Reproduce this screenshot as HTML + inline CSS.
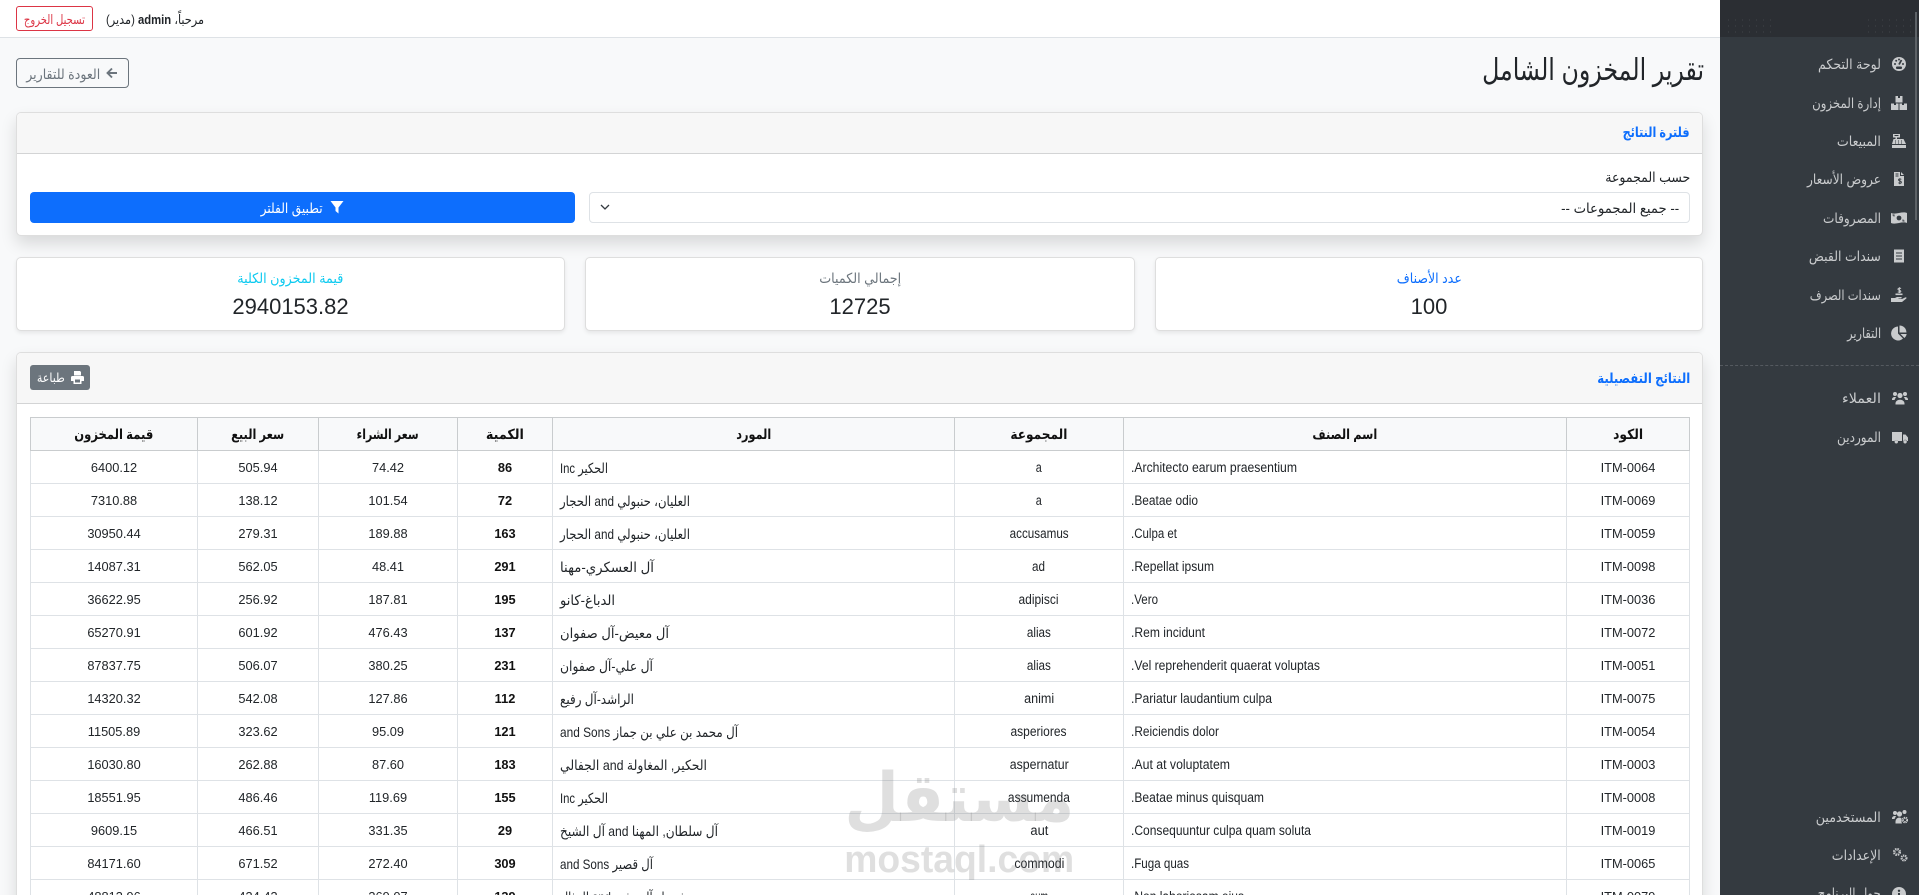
<!DOCTYPE html>
<html lang="ar" dir="rtl">
<head>
<meta charset="utf-8">
<title>تقرير المخزون الشامل</title>
<style>
*{box-sizing:border-box}
html,body{margin:0;padding:0;width:1919px;height:895px;overflow:hidden;background:#f8f9fa}
body{position:relative;font-family:"Liberation Sans","DejaVu Sans",sans-serif;font-size:13px;color:#212529}
#app{position:absolute;left:0;top:0;width:1919px;height:895px;overflow:hidden;contain:paint}
.a{position:absolute;white-space:nowrap}
.c{display:flex;justify-content:center}
.f{display:inline-block;white-space:nowrap;font-style:normal;transform-origin:center center}
.r .f{transform-origin:right center}
.l .f{transform-origin:left center}
#top{left:0;top:0;width:1720px;height:38px;background:#fff;border-bottom:1px solid #dee2e6}
#side{left:1720px;top:0;width:199px;height:895px;background:#343a40}
#sh{position:absolute;left:0;top:0;width:199px;height:37px;background:#2b2e33}
.dots{position:absolute;top:17px;height:20px;background-image:radial-gradient(circle,rgba(255,255,255,.1) .6px,transparent .8px);background-size:7px 6px}
#sb{position:absolute;left:195px;top:12px;width:2px;height:208px;background:#5d6267}
#dv{position:absolute;left:0;top:365px;width:199px;border-top:1px dashed #555a60}
.it{position:absolute;right:38px;height:20px;line-height:20px;font-size:14px;color:#c9cbcd;white-space:nowrap}
.ic{position:absolute;width:16px;height:16px;right:12px;fill:#c9cbcd}
.card{position:absolute;background:#fff;border:1px solid rgba(0,0,0,.13);border-radius:5px}
.hd{position:absolute;left:0;top:0;right:0;background:#f7f7f7;border-bottom:1px solid #d3d4d5;border-radius:4px 4px 0 0}
.sh{box-shadow:0 8px 16px rgba(0,0,0,.13)}
.ss{box-shadow:0 2px 4px rgba(0,0,0,.08)}
.lb{height:20px;line-height:20px;font-size:14px}
.num{height:28px;line-height:28px;text-align:center;font-size:22px;color:#212529}
table{position:absolute;left:30px;top:417px;width:1659px;border-collapse:collapse;table-layout:fixed;background:#fff;font-size:12.8px}
th{height:33px;padding:0 8px;background:#f8f9fa;border:1px solid #c9ccce;font-size:14px;color:#111;font-weight:bold;text-align:center}
td{height:33px;padding:0 7px;border:1px solid #dee2e6;text-align:center;color:#212529;white-space:nowrap}
td.l{text-align:left}
td.bd{font-weight:bold;color:#111}
td .f,th .f{line-height:18px}
td .f{font-size:13.5px;position:relative;top:1px}
td.s .f{font-size:14px}
#wm{left:0;top:0;width:1919px;height:895px;pointer-events:none}
</style>
</head>
<body>
<div id="app">

<div id="top" class="a"></div>
<div class="a" style="left:16px;top:6px;width:77px;height:25px;border:1px solid #dc3545;border-radius:3px"></div>
<div class="a c" style="left:16px;top:10px;width:77px;height:20px;color:#dc3545;font-size:13px;line-height:20px"><i class="f" style="--w:61">تسجيل الخروج</i></div>
<div class="a r" style="right:1715px;top:10px;height:20px;line-height:20px;font-size:13px;color:#212529"><i class="f" style="--w:98">مرحباً، <b>admin</b> (مدير)</i></div>

<div class="a r" style="right:215px;top:53px;height:36px;line-height:36px;font-size:30px;color:#212529"><i class="f" style="--w:222">تقرير المخزون الشامل</i></div>

<div class="a" style="left:16px;top:58px;width:113px;height:30px;border:1px solid #6c757d;border-radius:4px"></div>
<svg class="a" style="left:106px;top:67px" width="12" height="12" viewBox="0 0 12 12"><path d="M11 6H2M6 1.500 1.500 6 6 10.500" fill="none" stroke="#6c757d" stroke-width="1.900"/></svg>
<div class="a c" style="left:23px;top:64px;width:80px;height:20px;line-height:20px;font-size:14px;color:#6c757d"><i class="f" style="--w:74">العودة للتقارير</i></div>

<!-- filter card -->
<div class="card sh" style="left:16px;top:112px;width:1687px;height:124px">
  <div class="hd" style="height:41px"></div>
</div>
<div class="a r" style="right:229px;top:122px;height:20px;line-height:20px;font-size:14px;font-weight:bold;color:#0d6efd"><i class="f" style="--w:67">فلترة النتائج</i></div>
<div class="a r" style="right:229px;top:167px;height:20px;line-height:20px;font-size:14px;color:#212529"><i class="f" style="--w:85">حسب المجموعة</i></div>
<div class="a" style="left:589px;top:192px;width:1101px;height:31px;background:#fff;border:1px solid #dee2e6;border-radius:4px"></div>
<svg class="a" style="left:600px;top:203px" width="10" height="8" viewBox="0 0 10 8"><path d="M1 2l4 4 4-4" fill="none" stroke="#343a40" stroke-width="1.300"/></svg>
<div class="a r" style="right:240px;top:198px;height:20px;line-height:20px;font-size:14px;color:#212529"><i class="f" style="--w:118">-- جميع المجموعات --</i></div>
<div class="a" style="left:30px;top:192px;width:545px;height:31px;background:#0d6efd;border-radius:4px"></div>
<svg class="a" style="left:330px;top:200px" width="14" height="14" viewBox="0 0 14 14"><path d="M.5 1h13L8.500 7.500V13.500L5.500 11V7.500z" fill="#fff"/></svg>
<div class="a c" style="left:252px;top:198px;width:80px;height:20px;line-height:20px;font-size:14px;color:#fff"><i class="f" style="--w:62">تطبيق الفلتر</i></div>

<!-- stats -->
<div class="card ss" style="left:16px;top:257px;width:549px;height:74px"></div>
<div class="card ss" style="left:585px;top:257px;width:550px;height:74px"></div>
<div class="card ss" style="left:1155px;top:257px;width:548px;height:74px"></div>
<div class="a lb c" style="left:16px;top:268px;width:549px;color:#0dcaf0"><i class="f" style="--w:106">قيمة المخزون الكلية</i></div>
<div class="a num" style="left:16px;top:293px;width:549px">2940153.82</div>
<div class="a lb c" style="left:585px;top:268px;width:550px;color:#6c757d"><i class="f" style="--w:82">إجمالي الكميات</i></div>
<div class="a num" style="left:585px;top:293px;width:550px">12725</div>
<div class="a lb c" style="left:1155px;top:268px;width:548px;color:#0d6efd"><i class="f" style="--w:65">عدد الأصناف</i></div>
<div class="a num" style="left:1155px;top:293px;width:548px">100</div>

<!-- table card -->
<div class="card sh" style="left:16px;top:352px;width:1687px;height:600px">
  <div class="hd" style="height:51px"></div>
</div>
<div class="a r" style="right:229px;top:368px;height:20px;line-height:20px;font-size:14px;font-weight:bold;color:#0d6efd"><i class="f" style="--w:93">النتائج التفصيلية</i></div>
<div class="a" style="left:30px;top:365px;width:60px;height:25px;background:#6c757d;border-radius:3px"></div>
<svg class="a" style="left:71px;top:371px" width="13" height="13" viewBox="0 0 13 13"><path d="M3 0h6l1 1v3.500H3zM1.500 5h10A1.500 1.500 0 0 1 13 6.500V10h-2.500v3h-8v-3H0V6.500A1.500 1.500 0 0 1 1.500 5zM4 8.500V11.500h5V8.500z" fill="#fff"/></svg>
<div class="a c" style="left:31px;top:368px;width:40px;height:20px;line-height:20px;font-size:12.500px;color:#fff"><i class="f" style="--w:28">طباعة</i></div>

<table>
<colgroup><col style="width:123px"><col style="width:443px"><col style="width:169px"><col style="width:402px"><col style="width:95px"><col style="width:139px"><col style="width:121px"><col style="width:167px"></colgroup>
<thead><tr>
<th><b class="f" style="--w:30">الكود</b></th>
<th><b class="f" style="--w:65">اسم الصنف</b></th>
<th><b class="f" style="--w:57">المجموعة</b></th>
<th><b class="f" style="--w:35">المورد</b></th>
<th><b class="f" style="--w:38">الكمية</b></th>
<th><b class="f" style="--w:62">سعر الشراء</b></th>
<th><b class="f" style="--w:53">سعر البيع</b></th>
<th><b class="f" style="--w:79">قيمة المخزون</b></th>
</tr></thead>
<tbody>
<tr><td>ITM-0064</td><td class="l"><i class="f" style="--w:166">Architecto earum praesentium.</i></td><td><i class="f" style="--w:6">a</i></td><td class="l s"><i class="f" style="--w:48">الحكير Inc</i></td><td class="bd">86</td><td>74.42</td><td>505.94</td><td>6400.12</td></tr>
<tr><td>ITM-0069</td><td class="l"><i class="f" style="--w:67">Beatae odio.</i></td><td><i class="f" style="--w:6">a</i></td><td class="l s"><i class="f" style="--w:130">العليان، حنبولي and الحجار</i></td><td class="bd">72</td><td>101.54</td><td>138.12</td><td>7310.88</td></tr>
<tr><td>ITM-0059</td><td class="l"><i class="f" style="--w:46">Culpa et.</i></td><td><i class="f" style="--w:59">accusamus</i></td><td class="l s"><i class="f" style="--w:130">العليان، حنبولي and الحجار</i></td><td class="bd">163</td><td>189.88</td><td>279.31</td><td>30950.44</td></tr>
<tr><td>ITM-0098</td><td class="l"><i class="f" style="--w:83">Repellat ipsum.</i></td><td><i class="f" style="--w:13">ad</i></td><td class="l s"><i class="f" style="--w:94">آل العسكري-مهنا</i></td><td class="bd">291</td><td>48.41</td><td>562.05</td><td>14087.31</td></tr>
<tr><td>ITM-0036</td><td class="l"><i class="f" style="--w:27">Vero.</i></td><td><i class="f" style="--w:40">adipisci</i></td><td class="l s"><i class="f" style="--w:55">الدباغ-كانو</i></td><td class="bd">195</td><td>187.81</td><td>256.92</td><td>36622.95</td></tr>
<tr><td>ITM-0072</td><td class="l"><i class="f" style="--w:74">Rem incidunt.</i></td><td><i class="f" style="--w:24">alias</i></td><td class="l s"><i class="f" style="--w:109">آل معيض-آل صفوان</i></td><td class="bd">137</td><td>476.43</td><td>601.92</td><td>65270.91</td></tr>
<tr><td>ITM-0051</td><td class="l"><i class="f" style="--w:189">Vel reprehenderit quaerat voluptas.</i></td><td><i class="f" style="--w:24">alias</i></td><td class="l s"><i class="f" style="--w:93">آل علي-آل صفوان</i></td><td class="bd">231</td><td>380.25</td><td>506.07</td><td>87837.75</td></tr>
<tr><td>ITM-0075</td><td class="l"><i class="f" style="--w:141">Pariatur laudantium culpa.</i></td><td><i class="f" style="--w:30">animi</i></td><td class="l s"><i class="f" style="--w:74">الراشد-آل رفيع</i></td><td class="bd">112</td><td>127.86</td><td>542.08</td><td>14320.32</td></tr>
<tr><td>ITM-0054</td><td class="l"><i class="f" style="--w:88">Reiciendis dolor.</i></td><td><i class="f" style="--w:56">asperiores</i></td><td class="l s"><i class="f" style="--w:178">آل محمد بن علي بن جماز and Sons</i></td><td class="bd">121</td><td>95.09</td><td>323.62</td><td>11505.89</td></tr>
<tr><td>ITM-0003</td><td class="l"><i class="f" style="--w:99">Aut at voluptatem.</i></td><td><i class="f" style="--w:59">aspernatur</i></td><td class="l s"><i class="f" style="--w:147">الحكير, المغاولة and الجفالي</i></td><td class="bd">183</td><td>87.60</td><td>262.88</td><td>16030.80</td></tr>
<tr><td>ITM-0008</td><td class="l"><i class="f" style="--w:133">Beatae minus quisquam.</i></td><td><i class="f" style="--w:62">assumenda</i></td><td class="l s"><i class="f" style="--w:48">الحكير Inc</i></td><td class="bd">155</td><td>119.69</td><td>486.46</td><td>18551.95</td></tr>
<tr><td>ITM-0019</td><td class="l"><i class="f" style="--w:180">Consequuntur culpa quam soluta.</i></td><td><i class="f" style="--w:18">aut</i></td><td class="l s"><i class="f" style="--w:158">آل سلطان, المهنا and آل الشيخ</i></td><td class="bd">29</td><td>331.35</td><td>466.51</td><td>9609.15</td></tr>
<tr><td>ITM-0065</td><td class="l"><i class="f" style="--w:58">Fuga quas.</i></td><td><i class="f" style="--w:50">commodi</i></td><td class="l s"><i class="f" style="--w:93">آل قصير and Sons</i></td><td class="bd">309</td><td>272.40</td><td>671.52</td><td>84171.60</td></tr>
<tr><td>ITM-0079</td><td class="l"><i class="f" style="--w:113">Non laboriosam eius.</i></td><td><i class="f" style="--w:18">eum</i></td><td class="l s"><i class="f" style="--w:127">شربيل-آل رشيد and الهذال</i></td><td class="bd">139</td><td>369.07</td><td>434.43</td><td>48813.96</td></tr>
</tbody>
</table>

<!-- sidebar -->
<div id="side" class="a r">
  <div id="sh"></div>
  <div class="dots" style="left:5px;width:52px"></div>
  <div class="dots" style="left:145px;width:48px"></div>
  <div id="sb"></div>
  <div id="dv"></div>

  <div class="it" style="top:54px"><i class="f" style="--w:63">لوحة التحكم</i></div>
  <svg class="ic" style="top:56px" viewBox="0 0 16 16"><circle cx="8" cy="8" r="7"/><path d="M8 8.500 10.500 4" stroke="#343a40" stroke-width="1.800" fill="none"/><g fill="#343a40"><circle cx="4" cy="8" r="1"/><circle cx="5.200" cy="4.800" r="1"/><circle cx="8" cy="3.500" r="1"/><circle cx="12" cy="8" r="1"/><rect x="5" y="10.500" width="6" height="2.500" rx="1"/></g></svg>

  <div class="it" style="top:93px"><i class="f" style="--w:69">إدارة المخزون</i></div>
  <svg class="ic" style="top:95px" viewBox="0 0 16 16"><path d="M4.500 1H7v2h2V1h2.500v6.500h-7zM0 8.500h3V10h2V8.500h2.500V15H0zM8.500 8.500H11V10h2V8.500h3V15H8.500z"/></svg>

  <div class="it" style="top:131px"><i class="f" style="--w:44">المبيعات</i></div>
  <svg class="ic" style="top:133px" viewBox="0 0 16 16"><path d="M2 1h7v3.500H6V6h6.500L15 11H1l1.500-5H4.500V4.500H2zM1 12h14v3H1z"/><path d="M3.500 2.500h4M4 8h1M7 8h1M10 8h1M4 10h1M7 10h1M10 10h1" stroke="#343a40" stroke-width=".9"/></svg>

  <div class="it" style="top:169px"><i class="f" style="--w:74">عروض الأسعار</i></div>
  <svg class="ic" style="top:171px" viewBox="0 0 16 16"><path d="M3 1h6v4h4v10H3zM10 1l3 3h-3z"/><path d="M10.300 8.400c-.5-.6-2.800-.9-2.800.5 0 1.500 2.900.8 2.900 2.400 0 1.400-2.400 1.100-3 .4M8.800 7.300v6M4.500 3h3M4.500 5h3" stroke="#343a40" stroke-width=".9" fill="none"/></svg>

  <div class="it" style="top:208px"><i class="f" style="--w:58">المصروفات</i></div>
  <svg class="ic" style="top:210px" viewBox="0 0 16 16"><path d="M0 3c5 2 11-2 16 0v10c-5-2-11 2-16 0z"/><circle cx="8" cy="8" r="2.400" fill="#343a40"/><path d="M1.500 5h1.500v1.500M13.500 11h-1.500V9.500" stroke="#343a40" fill="none"/></svg>

  <div class="it" style="top:246px"><i class="f" style="--w:72">سندات القبض</i></div>
  <svg class="ic" style="top:248px" viewBox="0 0 16 16"><path d="M3 1l1 1 1-1 1 1 1-1 1 1 1-1 1 1 1-1 1 1 1-1v14l-1-1-1 1-1-1-1 1-1-1-1 1-1-1-1 1-1-1-1 1z"/><path d="M5 5h6M5 8h6M5 11h6" stroke="#343a40" stroke-width="1.100"/></svg>

  <div class="it" style="top:285px"><i class="f" style="--w:71">سندات الصرف</i></div>
  <svg class="ic" style="top:287px" viewBox="0 0 16 16"><path d="M0 11h4l2-1h4c1 0 1 1.500 0 1.500H7.500V12H11l3-1.500c1.500-.5 2 .5 1 1.300L11 15H0z"/><rect x="4.500" y="6.500" width="7" height="1.600"/><path d="M10 1.600C9.400 1 7 .9 7 2.200 7 3.600 9.800 3 9.800 4.400 9.800 5.500 7.500 5.400 6.800 4.800M8.400.3V6" stroke="#c9cbcd" stroke-width="1" fill="none"/></svg>

  <div class="it" style="top:323px"><i class="f" style="--w:34">التقارير</i></div>
  <svg class="ic" style="top:325px" viewBox="0 0 16 16"><path d="M7 1.500V8.500l5 5A7 7 0 1 1 7 1.500zM8.500 .5A7 7 0 0 1 15.500 7.500H8.500zM9.500 9h6.200a7 7 0 0 1-2.300 4z"/></svg>

  <div class="it" style="top:388px"><i class="f" style="--w:39">العملاء</i></div>
  <svg class="ic" style="top:390px;right:11px" viewBox="0 0 16 16"><circle cx="3" cy="4" r="2"/><circle cx="13" cy="4" r="2"/><circle cx="8" cy="5.500" r="2.600"/><path d="M0 9.500c0-2.500 3-3 4.300-2-1 .7-1.500 1.500-1.700 2.500H0zM16 9.500c0-2.500-3-3-4.300-2 1 .7 1.500 1.500 1.700 2.500H16zM3.500 13.500c0-5 9-5 9 0V14.500h-9z"/></svg>

  <div class="it" style="top:427px"><i class="f" style="--w:44">الموردين</i></div>
  <svg class="ic" style="top:429px;right:11px" viewBox="0 0 16 16"><path d="M0 3h10v9H6a2 2 0 0 0-3.500 0H0zM11 5.500h2.500L16 8.500V12h-1a2 2 0 0 0-3.700 0H11z"/><circle cx="4.300" cy="12.800" r="1.700"/><circle cx="13.100" cy="12.800" r="1.700"/></svg>

  <div class="it" style="top:807px"><i class="f" style="--w:65">المستخدمين</i></div>
  <svg class="ic" style="top:809px;right:11px" viewBox="0 0 16 16"><circle cx="3" cy="4" r="2"/><circle cx="12.500" cy="3" r="2"/><circle cx="7.500" cy="5" r="2.600"/><path d="M0 9.500c0-2.500 3-3 4.300-2-1 .7-1.500 1.500-1.700 2.500H0zM3.500 13c0-5 5-5 6-3.500v3.500l.5 1.500H3.500z"/><circle cx="13" cy="11" r="2.200" fill="none" stroke="#c9cbcd" stroke-width="2.200" stroke-dasharray="1.200 .6"/></svg>

  <div class="it" style="top:845px"><i class="f" style="--w:49">الإعدادات</i></div>
  <svg class="ic" style="top:847px;right:11px" viewBox="0 0 16 16"><circle cx="5" cy="5" r="2.800" fill="none" stroke="#c9cbcd" stroke-width="2.500" stroke-dasharray="1.400 .8"/><circle cx="12" cy="11" r="2.400" fill="none" stroke="#c9cbcd" stroke-width="2.200" stroke-dasharray="1.300 .7"/></svg>

  <div class="it" style="top:883px"><i class="f" style="--w:63">حول البرنامج</i></div>
  <svg class="ic" style="top:886px" viewBox="0 0 16 16"><circle cx="8" cy="8" r="7"/><rect x="7" y="7" width="2" height="5" fill="#343a40"/><circle cx="8" cy="4.800" r="1.200" fill="#343a40"/></svg>
</div>

<!-- watermark -->
<div id="wm" class="a">
  <div class="a c" style="left:844px;top:756px;width:230px;height:84px;line-height:84px;font-size:68px;font-weight:bold;color:rgba(120,120,120,.24)"><i class="f" style="--w:230">مستقل</i></div>
  <div class="a c" dir="ltr" style="left:844px;top:840px;width:230px;height:40px;line-height:40px;font-size:38px;font-weight:bold;color:rgba(120,120,120,.24)"><i class="f" style="--w:230">mostaql.com</i></div>
</div>

</div>
<script>
document.querySelectorAll('.f').forEach(function(e){
  var t=parseFloat(getComputedStyle(e).getPropertyValue('--w')),w=e.getBoundingClientRect().width;
  if(t&&w)e.style.transform='scaleX('+(t/w)+')';
});
</script>
</body>
</html>
